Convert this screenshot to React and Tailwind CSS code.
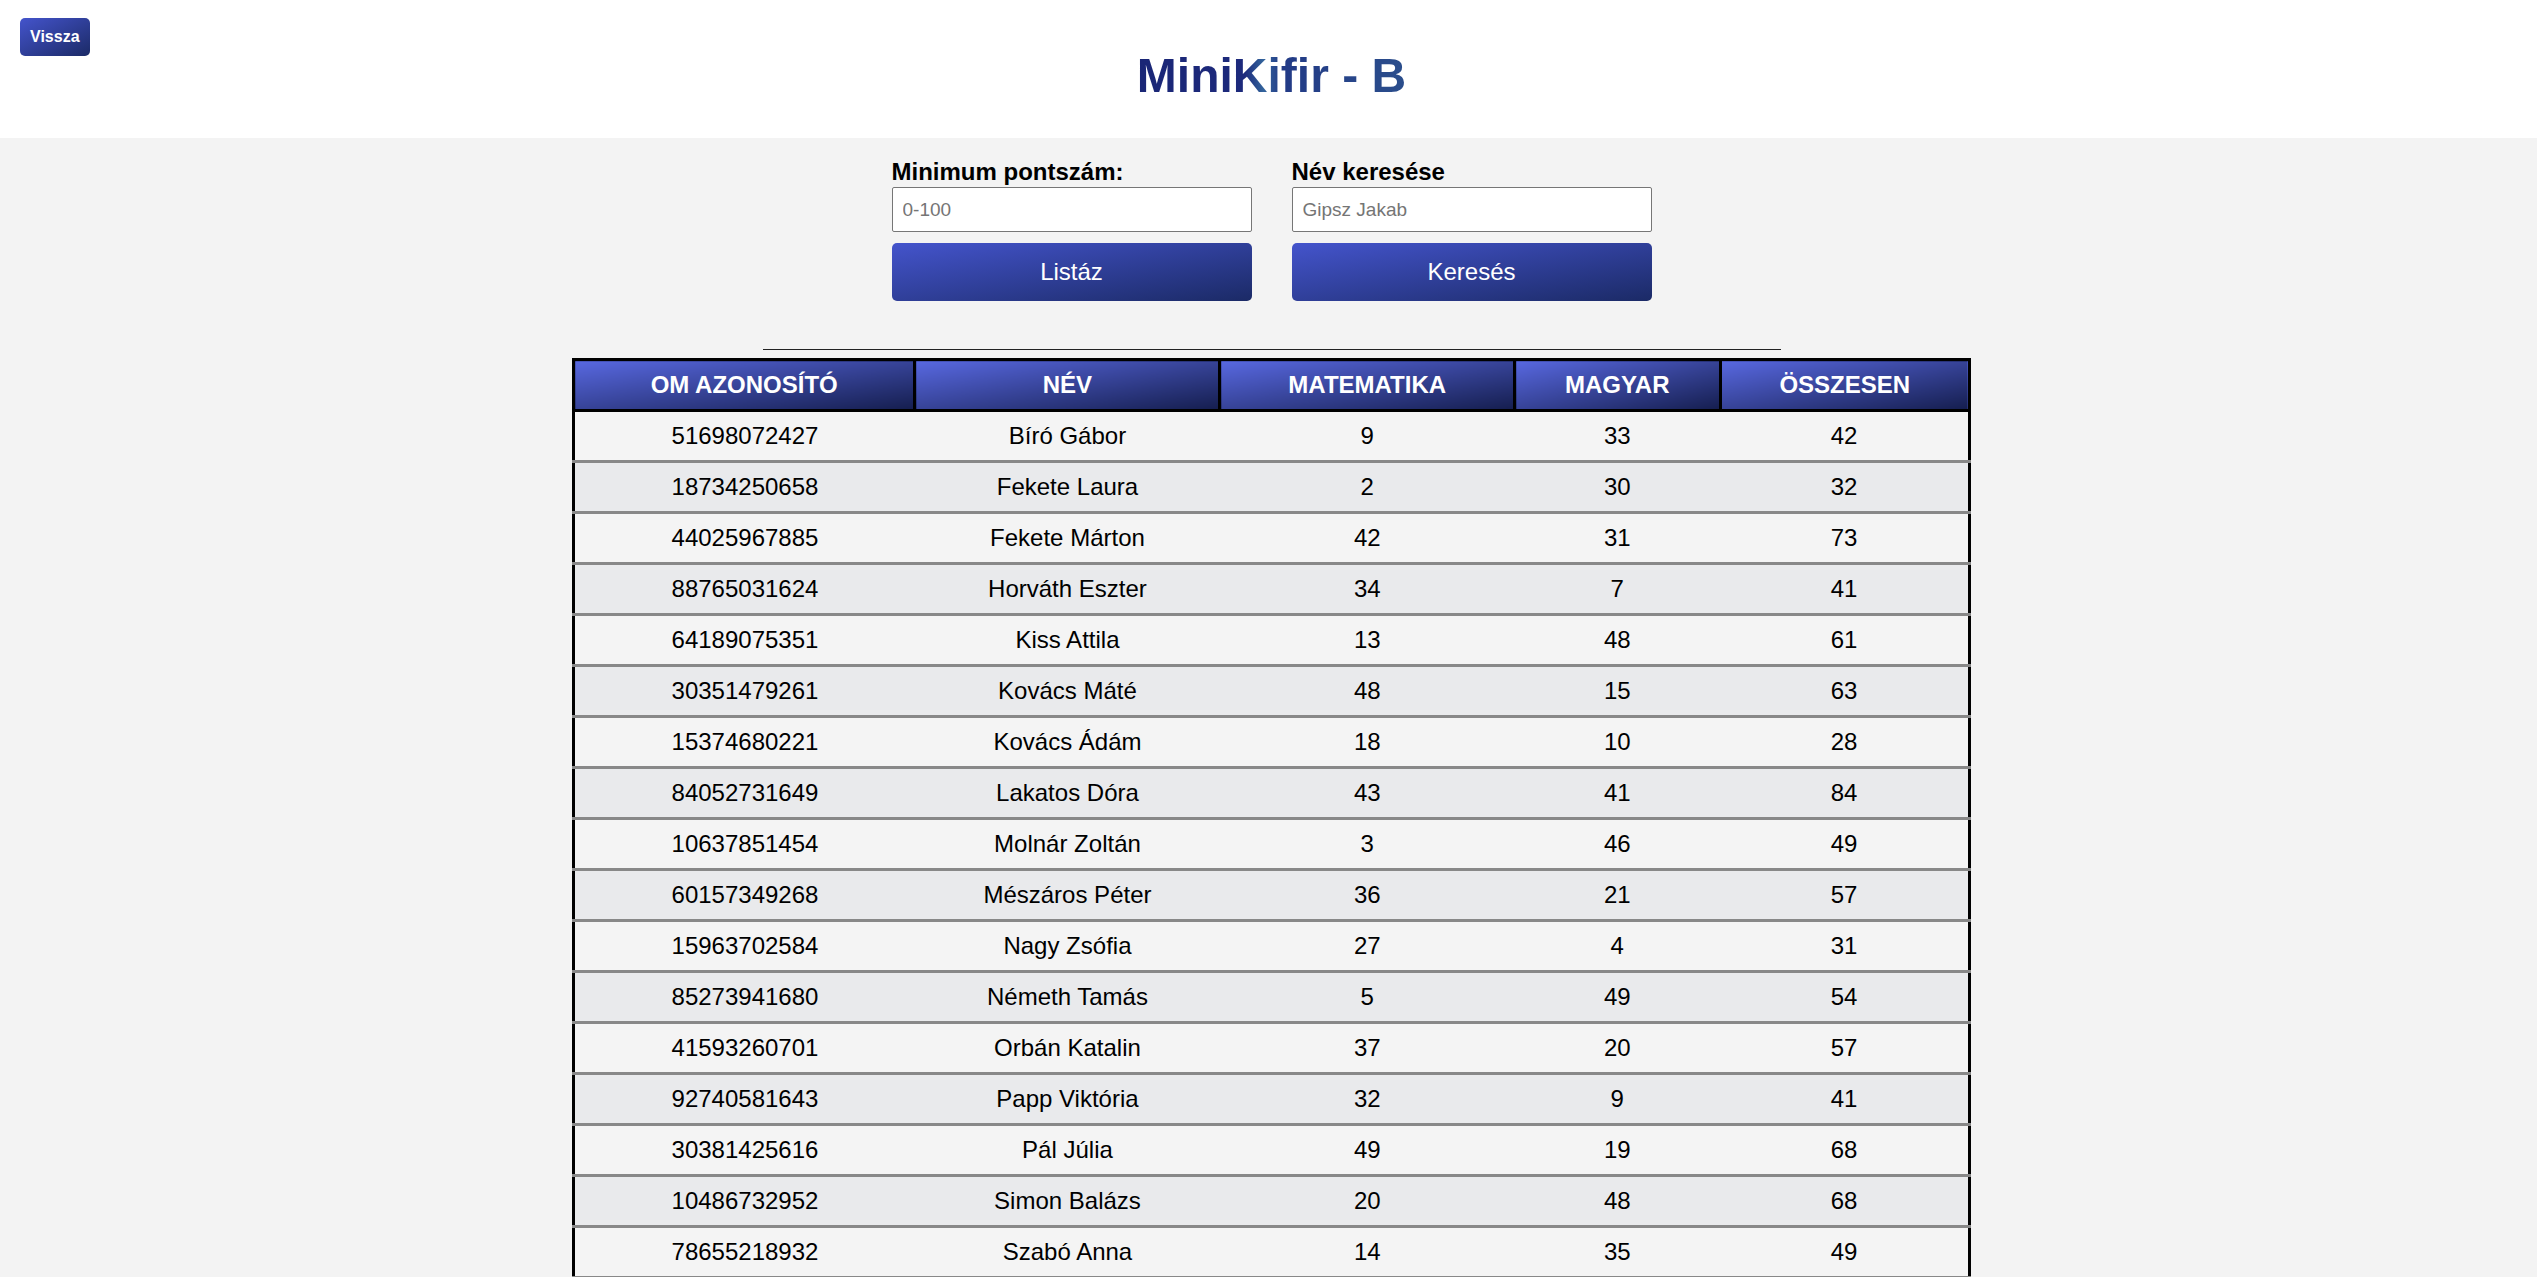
import React from "react";

const rows = [
  ["51698072427", "Bíró Gábor", 9, 33, 42],
  ["18734250658", "Fekete Laura", 2, 30, 32],
  ["44025967885", "Fekete Márton", 42, 31, 73],
  ["88765031624", "Horváth Eszter", 34, 7, 41],
  ["64189075351", "Kiss Attila", 13, 48, 61],
  ["30351479261", "Kovács Máté", 48, 15, 63],
  ["15374680221", "Kovács Ádám", 18, 10, 28],
  ["84052731649", "Lakatos Dóra", 43, 41, 84],
  ["10637851454", "Molnár Zoltán", 3, 46, 49],
  ["60157349268", "Mészáros Péter", 36, 21, 57],
  ["15963702584", "Nagy Zsófia", 27, 4, 31],
  ["85273941680", "Németh Tamás", 5, 49, 54],
  ["41593260701", "Orbán Katalin", 37, 20, 57],
  ["92740581643", "Papp Viktória", 32, 9, 41],
  ["30381425616", "Pál Júlia", 49, 19, 68],
  ["10486732952", "Simon Balázs", 20, 48, 68],
  ["78655218932", "Szabó Anna", 14, 35, 49],
];

const headers = ["OM AZONOSÍTÓ", "NÉV", "MATEMATIKA", "MAGYAR", "ÖSSZESEN"];

export default function App() {
  return (
    <div
      className="min-h-screen bg-[#f3f3f3] text-black"
      style={{ fontFamily: '"Liberation Sans", Arial, sans-serif' }}
    >
      <header className="grid grid-cols-[1fr_auto_1fr] bg-white pl-[6px] h-[138px]">
        <div className="justify-self-start self-start">
          <button className="mt-[18px] ml-[14px] rounded-[5px] bg-[linear-gradient(to_bottom_right,#4454cc,#1b2a66)] px-[10px] py-[10px] text-[16px] font-bold leading-[18px] text-white">
            Vissza
          </button>
        </div>
        <h1 className="pt-[48px] text-[48px] font-bold leading-[55px] bg-[linear-gradient(to_right,#1a2676_0%,#1d2a7c_40%,#33649c_47%,#223a86_54%,#2b4e8c_100%)] bg-clip-text text-transparent">
          MiniKifir - B
        </h1>
        <div />
      </header>

      <main className="flex flex-col items-center pl-[6px]">
        <div className="flex gap-[40px] pt-[20px]">
          <div className="flex w-[360px] flex-col">
            <label className="text-[24px] font-bold leading-[28px]">Minimum pontszám:</label>
            <input
              className="mt-[1px] h-[45px] w-full rounded-[2px] border border-[#767676] bg-white px-[10px] text-[19px] placeholder:text-[#757575] outline-none"
              placeholder="0-100"
            />
            <button className="mt-[11px] h-[58px] w-full rounded-[5px] bg-[linear-gradient(to_bottom_right,#4454cc,#1b2a66)] text-[24px] text-white">
              Listáz
            </button>
          </div>
          <div className="flex w-[360px] flex-col">
            <label className="text-[24px] font-bold leading-[28px]">Név keresése</label>
            <input
              className="mt-[1px] h-[45px] w-full rounded-[2px] border border-[#767676] bg-white px-[10px] text-[19px] placeholder:text-[#757575] outline-none"
              placeholder="Gipsz Jakab"
            />
            <button className="mt-[11px] h-[58px] w-full rounded-[5px] bg-[linear-gradient(to_bottom_right,#4454cc,#1b2a66)] text-[24px] text-white">
              Keresés
            </button>
          </div>
        </div>

        <div className="mt-[48px] h-px w-[1018px] bg-[#222]" />

        <table className="mt-[8px] w-[1399px] table-fixed border-collapse border-[3px] border-black">
          <colgroup>
            <col className="w-[24.46%]" />
            <col className="w-[21.85%]" />
            <col className="w-[21.1%]" />
            <col className="w-[14.72%]" />
            <col className="w-[17.87%]" />
          </colgroup>
          <thead>
            <tr>
              {headers.map((h) => (
                <th
                  key={h}
                  className="border-[3px] border-black bg-[linear-gradient(to_bottom_right,#5868e0,#151e4f)] py-[10px] text-center text-[24px] font-bold leading-[28px] text-white"
                >
                  {h}
                </th>
              ))}
            </tr>
          </thead>
          <tbody>
            {rows.map((r, i) => (
              <tr key={r[0]} className={i % 2 === 0 ? "bg-[#f4f4f4]" : "bg-[#e9eaec]"}>
                {r.map((c, j) => (
                  <td
                    key={j}
                    className="border-b-[3px] border-[#888888] py-[10px] text-center text-[24px] leading-[28px]"
                  >
                    {c}
                  </td>
                ))}
              </tr>
            ))}
          </tbody>
        </table>
      </main>
    </div>
  );
}
